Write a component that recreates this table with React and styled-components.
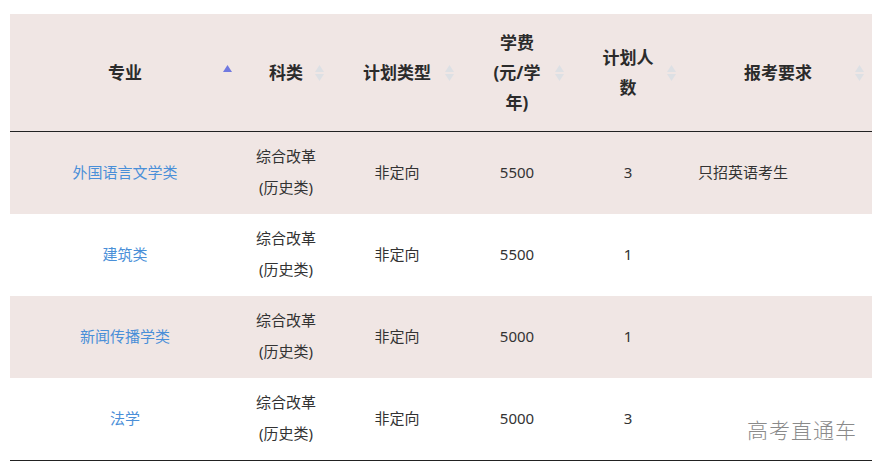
import React from "react";
import styled, { createGlobalStyle } from "styled-components";

const GlobalStyle = createGlobalStyle`
  body {
    margin: 0;
    background: #ffffff;
    font-family: "Noto Sans", "Noto Sans CJK SC", sans-serif;
    color: #333333;
  }
`;

const columns = [
  { key: "major", title: ["专业"], active: true },
  { key: "kind", title: ["科类"] },
  { key: "plan", title: ["计划类型"] },
  { key: "fee", title: ["学费", "(元/学", "年)"] },
  { key: "count", title: ["计划人", "数"] },
  { key: "req", title: ["报考要求"] },
];

const rows = [
  { major: "外国语言文学类", fee: "5500", count: "3", req: "只招英语考生" },
  { major: "建筑类", fee: "5500", count: "1", req: "" },
  { major: "新闻传播学类", fee: "5000", count: "1", req: "" },
  { major: "法学", fee: "5000", count: "3", req: "" },
];

const SortIcon = ({ active }) => (
  <SortWrap>
    <svg width="11" height="18" viewBox="0 0 11 18">
      <polygon points="5.5,1 10,8 1,8" fill={active ? "#7079e0" : "#dde0e4"} />
      {!active && <polygon points="1,10 10,10 5.5,17" fill="#dde0e4" />}
    </svg>
  </SortWrap>
);

const App = () => {
  return (
    <Page>
      <GlobalStyle />
      <Table>
        <HeadRow>
          {columns.map((c) => (
            <HeadCell key={c.key}>
              <span>
                {c.title.map((line, i) => (
                  <div key={i}>{line}</div>
                ))}
              </span>
              <SortIcon active={c.active} />
            </HeadCell>
          ))}
        </HeadRow>
        {rows.map((r, i) => (
          <BodyRow key={r.major} $shaded={i % 2 === 0}>
            <Cell>
              <MajorLink>{r.major}</MajorLink>
            </Cell>
            <Cell>
              <span>
                <div>综合改革</div>
                <div>(历史类)</div>
              </span>
            </Cell>
            <Cell>非定向</Cell>
            <Cell>{r.fee}</Cell>
            <Cell>{r.count}</Cell>
            <Cell $left>{r.req}</Cell>
          </BodyRow>
        ))}
      </Table>
      <Watermark>高考直通车</Watermark>
    </Page>
  );
};

const Page = styled.div`
  position: relative;
  width: 885px;
  height: 469px;
  padding: 14px 13px 0 10px;
  box-sizing: border-box;
`;

const Table = styled.div`
  width: 862px;
  border-bottom: 1px solid #222222;
`;

const grid = `
  display: grid;
  grid-template-columns: 230px 92px 130px 110px 112px 188px;
`;

const HeadRow = styled.div`
  ${grid}
  height: 117px;
  background: #f0e6e4;
  border-bottom: 1px solid #222222;
`;

const HeadCell = styled.div`
  position: relative;
  display: flex;
  align-items: center;
  justify-content: center;
  text-align: center;
  font-size: 17px;
  font-weight: 700;
  line-height: 30px;
  color: #2b2b2b;
`;

const SortWrap = styled.span`
  position: absolute;
  right: 7px;
  top: 50%;
  transform: translateY(-50%);
  display: flex;
`;

const BodyRow = styled.div`
  ${grid}
  height: 82px;
  background: ${(p) => (p.$shaded ? "#f0e6e4" : "#ffffff")};
`;

const Cell = styled.div`
  display: flex;
  align-items: center;
  justify-content: ${(p) => (p.$left ? "flex-start" : "center")};
  padding: ${(p) => (p.$left ? "0 0 2px 14px" : "0 0 2px 0")};
  text-align: center;
  font-size: 15px;
  line-height: 31px;
  color: #333333;
`;

const MajorLink = styled.a`
  color: #4a8fd8;
  text-decoration: none;
  cursor: pointer;
`;

const Watermark = styled.div`
  position: absolute;
  left: 747px;
  top: 414px;
  font-size: 21px;
  letter-spacing: 1px;
  color: #8a8a8a;
  font-weight: 300;
`;

export default App;
